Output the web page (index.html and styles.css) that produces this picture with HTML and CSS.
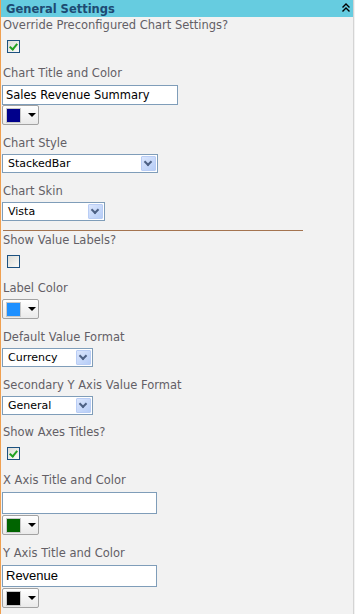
FILE: index.html
```html
<!DOCTYPE html>
<html lang="en">
<head>
  <meta charset="UTF-8">
  <title>General Settings</title>
  <link rel="stylesheet" href="styles.css">
</head>
<body>
  <div class="panel">
    <div class="panel-head">
      <span class="panel-title">General Settings</span>
      <svg class="collapse" width="8" height="9" viewBox="0 0 8 9">
        <path d="M0.5 4.5 L4 1 L7.5 4.5 M0.5 8.5 L4 5 L7.5 8.5" fill="none" stroke="#000" stroke-width="1.4"/>
      </svg>
    </div>

    <div class="panel-body">
      <div class="field">
        <div class="lbl first for-check">Override Preconfigured Chart Settings?</div>
        <span class="check checked"></span>
      </div>

      <div class="field">
        <div class="lbl after-check for-text">Chart Title and Color</div>
        <div class="textbox wide">Sales Revenue Summary</div>
        <div class="colorbtn"><span class="swatch navy"></span><span class="tri"></span></div>
      </div>

      <div class="field">
        <div class="lbl">Chart Style</div>
        <div class="dropdown w156">StackedBar<span class="arrow"></span></div>
      </div>

      <div class="field">
        <div class="lbl">Chart Skin</div>
        <div class="dropdown w103">Vista<span class="arrow"></span></div>
      </div>

      <hr class="divider">

      <div class="field">
        <div class="lbl after-rule for-check">Show Value Labels?</div>
        <span class="check"></span>
      </div>

      <div class="field">
        <div class="lbl after-check">Label Color</div>
        <div class="colorbtn"><span class="swatch blue"></span><span class="tri"></span></div>
      </div>

      <div class="field">
        <div class="lbl">Default Value Format</div>
        <div class="dropdown w91">Currency<span class="arrow"></span></div>
      </div>

      <div class="field">
        <div class="lbl">Secondary Y Axis Value Format</div>
        <div class="dropdown w91">General<span class="arrow"></span></div>
      </div>

      <div class="field">
        <div class="lbl snug for-check">Show Axes Titles?</div>
        <span class="check checked"></span>
      </div>

      <div class="field">
        <div class="lbl after-check for-text">X Axis Title and Color</div>
        <div class="textbox mid"></div>
        <div class="colorbtn"><span class="swatch green"></span><span class="tri"></span></div>
      </div>

      <div class="field">
        <div class="lbl for-text">Y Axis Title and Color</div>
        <div class="textbox mid arial">Revenue</div>
        <div class="colorbtn"><span class="swatch black"></span><span class="tri"></span></div>
      </div>
    </div>
  </div>
</body>
</html>
```

FILE: styles.css
```css
/* Page */
body {
  margin: 0;
  background: #f2f2f2;
  font-family: "DejaVu Sans", Verdana, sans-serif;
}

/* Panel frame */
.panel {
  width: 352px;
  height: 614px;
  border-left: 1px solid #f0a050;
  border-right: 1px solid #d4d4d4;
  background: #f2f2f2;
  overflow: hidden;
}

.panel-head {
  height: 17px;
  background: #66cce0;
  display: flex;
  align-items: center;
  justify-content: space-between;
  padding: 0 3px 0 5px;
}

.panel-title {
  font-size: 11.5px;
  font-weight: bold;
  color: #1d4a72;
}

.collapse {
  margin-top: -2px;
}

.panel-body {
  padding-left: 1px;
}

/* Fields */
.field {
  display: flex;
  flex-direction: column;
  align-items: flex-start;
}

.lbl {
  font-size: 11.5px;
  line-height: 14px;
  color: #635f66;
  margin-top: 11px;
  margin-bottom: 4px;
  padding-left: 1px;
}

.lbl.first { margin-top: 1px; }
.lbl.snug { margin-top: 10px; }
.lbl.after-check { margin-top: 13px; }
.lbl.after-rule { margin-top: 2px; }
.lbl.for-check { margin-bottom: 8px; }
.lbl.for-text { margin-bottom: 5px; }

/* Checkboxes */
.check {
  display: block;
  width: 11px;
  height: 11px;
  margin-left: 5px;
  border: 1px solid #1c5180;
  background: linear-gradient(135deg, #dcdcd6, #fbfbf9);
  position: relative;
}

.check.checked::after {
  content: "";
  position: absolute;
  left: 3px;
  top: 1px;
  width: 3px;
  height: 6px;
  border: solid #21a121;
  border-width: 0 2px 2px 0;
  transform: rotate(40deg);
}

/* Text boxes */
.textbox {
  box-sizing: border-box;
  height: 20px;
  border: 1px solid #7f9db9;
  background: #fff;
  font-size: 11.5px;
  line-height: 18px;
  padding-left: 3px;
  color: #000;
}

.textbox.wide {
  width: 176px;
}

.textbox.mid {
  width: 155px;
  height: 22px;
  line-height: 20px;
  margin-bottom: 1px;
}

.textbox.arial {
  font-family: "Liberation Sans", Arial, sans-serif;
  font-size: 13px;
}

/* Drop downs */
.dropdown {
  box-sizing: border-box;
  position: relative;
  height: 19px;
  border: 1px solid #7f9db9;
  background: #fff;
  font-size: 11px;
  line-height: 17px;
  padding-left: 5px;
  color: #000;
}

.w156 { width: 156px; }
.w103 { width: 103px; }
.w91 { width: 91px; }

.arrow {
  position: absolute;
  right: 1px;
  top: 1px;
  width: 15px;
  height: 15px;
  border-radius: 1px;
  background: linear-gradient(135deg, #dbe6fd, #b6cdf7);
  border: 1px solid #b9cdf5;
  box-sizing: border-box;
}

.arrow::after {
  content: "";
  position: absolute;
  left: 3px;
  top: 2px;
  width: 4px;
  height: 4px;
  border: solid #4d6185;
  border-width: 0 2px 2px 0;
  transform: rotate(45deg);
}

/* Colour picker buttons */
.colorbtn {
  box-sizing: border-box;
  width: 37px;
  height: 20px;
  border: 1px solid #a2a2a2;
  border-radius: 2px;
  background: linear-gradient(#ffffff, #eaeaea);
  display: flex;
  align-items: center;
  padding-left: 3px;
  gap: 7px;
}

.swatch {
  width: 13px;
  height: 13px;
  border: 1px solid #c8c8c8;
}

.navy { background: #00008b; }
.blue { background: #1e90ff; }
.green { background: #006400; }
.black { background: #000; }

.tri {
  width: 0;
  height: 0;
  border-left: 4px solid transparent;
  border-right: 4px solid transparent;
  border-top: 4px solid #000;
}

.divider {
  width: 300px;
  margin: 9px 0 0 1px;
  border: 0;
  border-top: 1px solid #a47450;
  height: 0;
}
```
